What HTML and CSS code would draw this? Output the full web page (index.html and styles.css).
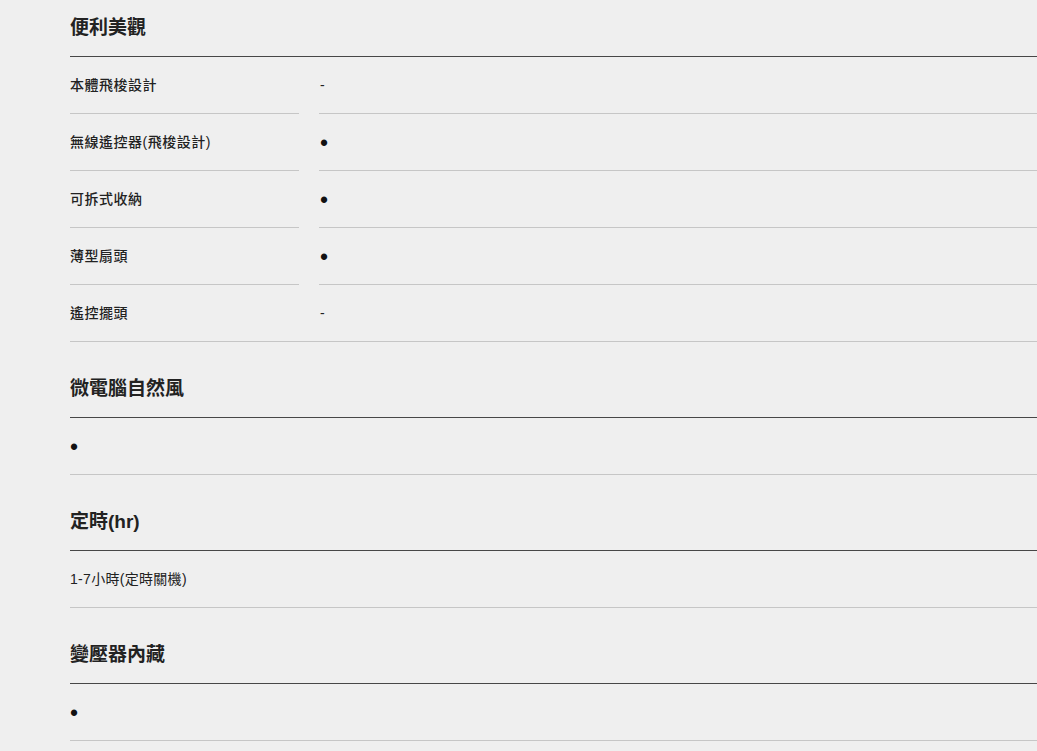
FILE: index.html
```html
<!DOCTYPE html>
<html lang="zh-Hant">
<head>
<meta charset="utf-8">
<title>規格</title>
<link rel="stylesheet" href="styles.css">
</head>
<body>
<main class="specs">
  <section class="spec-group">
    <h2 class="spec-title">便利美觀</h2>
    <dl class="spec-list">
      <div class="spec-row"><dt>本體飛梭設計</dt><dd>-</dd></div>
      <div class="spec-row"><dt>無線遙控器(飛梭設計)</dt><dd><span class="dot">•</span></dd></div>
      <div class="spec-row"><dt>可拆式收納</dt><dd><span class="dot">•</span></dd></div>
      <div class="spec-row"><dt>薄型扇頭</dt><dd><span class="dot">•</span></dd></div>
      <div class="spec-row"><dt>遙控擺頭</dt><dd>-</dd></div>
    </dl>
  </section>
  <section class="spec-group">
    <h2 class="spec-title">微電腦自然風</h2>
    <div class="spec-value"><span class="dot">•</span></div>
  </section>
  <section class="spec-group">
    <h2 class="spec-title">定時(hr)</h2>
    <div class="spec-value">1-7小時(定時關機)</div>
  </section>
  <section class="spec-group">
    <h2 class="spec-title">變壓器內藏</h2>
    <div class="spec-value"><span class="dot">•</span></div>
  </section>
</main>
</body>
</html>
```
FILE: styles.css
```css
html, body {
  margin: 0;
  padding: 0;
  background: #efefef;
  overflow: hidden;
}
body {
  font-family: "Liberation Sans", "Noto Sans CJK TC", sans-serif;
  color: #222;
}
.specs {
  padding: 12px 0 0 70px;
}
.spec-group + .spec-group {
  margin-top: 31px;
}
.spec-title {
  margin: 0;
  font-size: 19px;
  line-height: 32px;
  font-weight: 700;
  padding-bottom: 12px;
  border-bottom: 1px solid #474747;
}
.spec-list {
  margin: 0;
  border-bottom: 1px solid #c6c6c6;
}
.spec-row {
  display: grid;
  grid-template-columns: 229px 1fr;
  column-gap: 20px;
}
.spec-row dt,
.spec-row dd {
  margin: 0;
  padding: 18px 0;
  font-size: 14px;
  line-height: 20px;
  border-bottom: 1px solid #c6c6c6;
}
.spec-row:last-child dt,
.spec-row:last-child dd {
  border-bottom: none;
}
.spec-row dt {
  font-weight: 500;
  letter-spacing: 0.5px;
}
.spec-row dd {
  padding-left: 1px;
}
.spec-value {
  padding: 18px 0;
  font-size: 14px;
  line-height: 20px;
  letter-spacing: 0.3px;
  border-bottom: 1px solid #c6c6c6;
}
.dot {
  font-size: 23px;
  line-height: 20px;
  display: inline-block;
  vertical-align: top;
  color: #111;
  transform: translateY(1px);
}
```
